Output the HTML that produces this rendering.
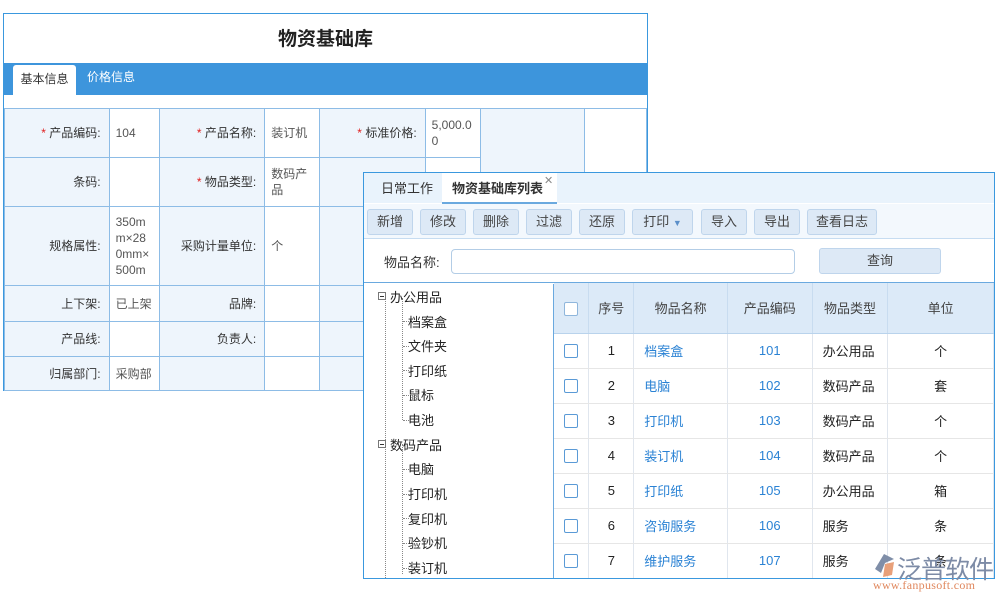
<!DOCTYPE html>
<html><head><meta charset="utf-8"><style>
*{margin:0;padding:0;box-sizing:border-box}
body{width:1000px;height:600px;background:#fff;position:relative;overflow:hidden;font-family:"Liberation Sans","Noto Sans CJK SC",sans-serif;font-size:12px;color:#333}
.abs{position:absolute}
#lp{left:3px;top:13px;width:645px;height:378px;border:1px solid #3a98de;background:#fff}
#lp h1{position:absolute;left:0;right:0;top:10px;text-align:center;font-size:19px;font-weight:bold;color:#222}
#tabbar{position:absolute;left:0;top:49px;width:643px;height:32px;background:#3d95dc}
.t1{position:absolute;left:9px;top:2px;width:63px;height:30px;background:#fff;border-radius:3px 3px 0 0;text-align:center;line-height:28px;color:#333}
.t2{position:absolute;left:83px;top:0;line-height:28px;color:#fff}
#ft{position:absolute;left:0;top:94px;border-collapse:collapse;table-layout:fixed}
#ft td{border:1px solid #8dbce6;font-size:12px;vertical-align:middle;padding:0 6px;line-height:16px}
#ft td.l{background:#eef5fc;text-align:right;padding-right:8px}
#ft td.v{background:#fff;color:#555}
.r{color:#e02020}
#rp{left:363px;top:172px;width:632px;height:407px;border:1px solid #3a98de;background:#fff;overflow:hidden}
#rt{position:absolute;left:0;top:0;width:630px;height:30px;background:#e9f3fc}
#rt .a{position:absolute;left:17px;top:5px;font-size:13px}
#rt .b{position:absolute;left:78px;top:0;width:115px;height:31px;background:#fff;border-bottom:2px solid #6aa9df;font-size:13px;font-weight:bold;padding:5px 0 0 10px}
#rt .x{position:absolute;left:180px;top:1px;font-size:11px;color:#888}
#tb{position:absolute;left:0;top:31px;width:630px;height:35px;background:#f3f8fd;border-bottom:1px solid #c6dcf1}
.btn{position:absolute;top:5px;height:26px;background:#dde9f6;border:1px solid #bfd5ec;border-radius:3px;text-align:center;line-height:24px;font-size:13px;color:#444}
#sr{position:absolute;left:0;top:66px;width:630px;height:44px;border-bottom:1px solid #6aa9df}
.inp{position:absolute;left:87px;top:10px;width:344px;height:25px;border:1px solid #b3cde6;border-radius:4px;background:#fff}
#tree{position:absolute;left:0;top:111px;width:190px;height:300px;border-right:1px solid #6aa9df}
.ti{position:absolute;font-size:13px;color:#222}
.vl{position:absolute;border-left:1px dotted #888}
.hl{position:absolute;border-top:1px dotted #888;width:6px}
.pm{position:absolute;width:8px;height:8px;border:1px solid #777;background:#fff}
.pm:after{content:"";position:absolute;left:1px;top:3px;width:4px;height:1px;background:#333}
#grid{position:absolute;left:190px;top:110px;border-collapse:collapse;table-layout:fixed}
#grid td{border-right:1px solid #e0e6ee;border-bottom:1px solid #e6e6e6;text-align:center;height:35px;font-size:13px;color:#222}
#grid tr.h td{background:#dceaf8;height:50px;border-right:1px solid #c8dcf0;border-bottom:1px solid #b9d3ec;color:#444}
#grid td.lk{color:#2a82d4;text-align:left;padding-left:10px}
#grid td.c{color:#2a82d4}
#grid td.tp{text-align:left;padding-left:10px}
.cb{display:inline-block;width:14px;height:14px;border:1px solid #5a9ad6;border-radius:2px;background:#fff;vertical-align:middle}
</style></head><body>
<div id="lp" class="abs">
<h1>物资基础库</h1>
<div id="tabbar"><div class="t1">基本信息</div><div class="t2">价格信息</div></div>
<table id="ft">
<colgroup><col style="width:105px"><col style="width:50px"><col style="width:106px"><col style="width:55px"><col style="width:106px"><col style="width:55px"><col style="width:105px"><col style="width:62px"></colgroup>
<tr style="height:49px"><td class="l"><span class="r">* </span>产品编码:</td><td class="v">104</td><td class="l"><span class="r">* </span>产品名称:</td><td class="v">装订机</td><td class="l"><span class="r">* </span>标准价格:</td><td class="v">5,000.0<br>0</td><td class="l" rowspan="2"></td><td class="v" rowspan="2"></td></tr>
<tr style="height:49px"><td class="l">条码:</td><td class="v"></td><td class="l"><span class="r">* </span>物品类型:</td><td class="v">数码产<br>品</td><td class="l"></td><td class="v"></td></tr>
<tr style="height:79px"><td class="l">规格属性:</td><td class="v">350m<br>m×28<br>0mm×<br>500m</td><td class="l">采购计量单位:</td><td class="v">个</td><td class="l"></td><td class="v"></td><td class="l"></td><td class="v"></td></tr>
<tr style="height:36px"><td class="l">上下架:</td><td class="v">已上架</td><td class="l">品牌:</td><td class="v"></td><td class="l">库存</td><td class="v"></td><td class="l"></td><td class="v"></td></tr>
<tr style="height:35px"><td class="l">产品线:</td><td class="v"></td><td class="l">负责人:</td><td class="v"></td><td class="l"></td><td class="v"></td><td class="l"></td><td class="v"></td></tr>
<tr style="height:34px"><td class="l">归属部门:</td><td class="v">采购部</td><td class="l"></td><td class="v"></td><td class="l"></td><td class="v"></td><td class="l"></td><td class="v"></td></tr>
</table>
</div>

<div id="rp" class="abs">
<div id="rt"><span class="a">日常工作</span><div class="b">物资基础库列表</div><span class="x">✕</span></div>
<div id="tb">
<div class="btn" style="left:3px;width:46px">新增</div>
<div class="btn" style="left:56px;width:46px">修改</div>
<div class="btn" style="left:109px;width:46px">删除</div>
<div class="btn" style="left:162px;width:46px">过滤</div>
<div class="btn" style="left:215px;width:46px">还原</div>
<div class="btn" style="left:268px;width:61px">打印 <span style="font-size:9px;color:#5b8fc9">▼</span></div>
<div class="btn" style="left:337px;width:46px">导入</div>
<div class="btn" style="left:390px;width:46px">导出</div>
<div class="btn" style="left:443px;width:70px">查看日志</div>
</div>
<div id="sr"><span class="abs" style="left:20px;top:13px;font-size:13px">物品名称:</span><div class="inp"></div>
<div class="btn" style="left:455px;top:9px;width:122px;height:26px;line-height:24px">查询</div></div>
<div id="tree">
<div class="vl" style="left:21px;top:14px;height:290px"></div>
<div class="vl" style="left:38px;top:14px;height:122px"></div>
<div class="vl" style="left:38px;top:160px;height:130px"></div>
<div class="pm" style="left:14px;top:8px"></div><span class="ti" style="left:26px;top:3px">办公用品</span>
<div class="hl" style="left:39px;top:37px"></div><span class="ti" style="left:44px;top:28px">档案盒</span>
<div class="hl" style="left:39px;top:62px"></div><span class="ti" style="left:44px;top:52px">文件夹</span>
<div class="hl" style="left:39px;top:86px"></div><span class="ti" style="left:44px;top:77px">打印纸</span>
<div class="hl" style="left:39px;top:111px"></div><span class="ti" style="left:44px;top:101px">鼠标</span>
<div class="hl" style="left:39px;top:136px"></div><span class="ti" style="left:44px;top:126px">电池</span>
<div class="pm" style="left:14px;top:156px"></div><span class="ti" style="left:26px;top:151px">数码产品</span>
<div class="hl" style="left:39px;top:185px"></div><span class="ti" style="left:44px;top:175px">电脑</span>
<div class="hl" style="left:39px;top:210px"></div><span class="ti" style="left:44px;top:200px">打印机</span>
<div class="hl" style="left:39px;top:234px"></div><span class="ti" style="left:44px;top:225px">复印机</span>
<div class="hl" style="left:39px;top:259px"></div><span class="ti" style="left:44px;top:249px">验钞机</span>
<div class="hl" style="left:39px;top:284px"></div><span class="ti" style="left:44px;top:274px">装订机</span>
</div>
<table id="grid">
<colgroup><col style="width:35px"><col style="width:45px"><col style="width:94px"><col style="width:85px"><col style="width:76px"><col style="width:106px"></colgroup>
<tr class="h"><td><span class="cb" style="border-color:#8fb6dc"></span></td><td>序号</td><td>物品名称</td><td>产品编码</td><td>物品类型</td><td>单位</td></tr>
<tr><td><span class="cb"></span></td><td>1</td><td class="lk">档案盒</td><td class="c">101</td><td class="tp">办公用品</td><td>个</td></tr>
<tr><td><span class="cb"></span></td><td>2</td><td class="lk">电脑</td><td class="c">102</td><td class="tp">数码产品</td><td>套</td></tr>
<tr><td><span class="cb"></span></td><td>3</td><td class="lk">打印机</td><td class="c">103</td><td class="tp">数码产品</td><td>个</td></tr>
<tr><td><span class="cb"></span></td><td>4</td><td class="lk">装订机</td><td class="c">104</td><td class="tp">数码产品</td><td>个</td></tr>
<tr><td><span class="cb"></span></td><td>5</td><td class="lk">打印纸</td><td class="c">105</td><td class="tp">办公用品</td><td>箱</td></tr>
<tr><td><span class="cb"></span></td><td>6</td><td class="lk">咨询服务</td><td class="c">106</td><td class="tp">服务</td><td>条</td></tr>
<tr><td><span class="cb"></span></td><td>7</td><td class="lk">维护服务</td><td class="c">107</td><td class="tp">服务</td><td>条</td></tr>
</table>
</div>

<svg class="abs" style="left:872px;top:553px" width="24" height="26" viewBox="0 0 24 26"><path d="M12 1 L22 6 L13 10 L9 20 L3 16 Z" fill="#7f8ea8"/><path d="M13 11 L22 9 L20 22 L11 24 Z" fill="#e8a07a"/></svg>
<div class="abs" style="left:897px;top:550px;font-size:25px;color:#7d8ba6;letter-spacing:-1px;font-family:'Liberation Sans','Noto Sans CJK SC',sans-serif">泛普软件</div>
<div class="abs" style="left:873px;top:578px;font-size:12px;color:#e0885e;font-family:'Liberation Serif',serif;letter-spacing:0.3px">www.fanpusoft.com</div>
</body></html>
